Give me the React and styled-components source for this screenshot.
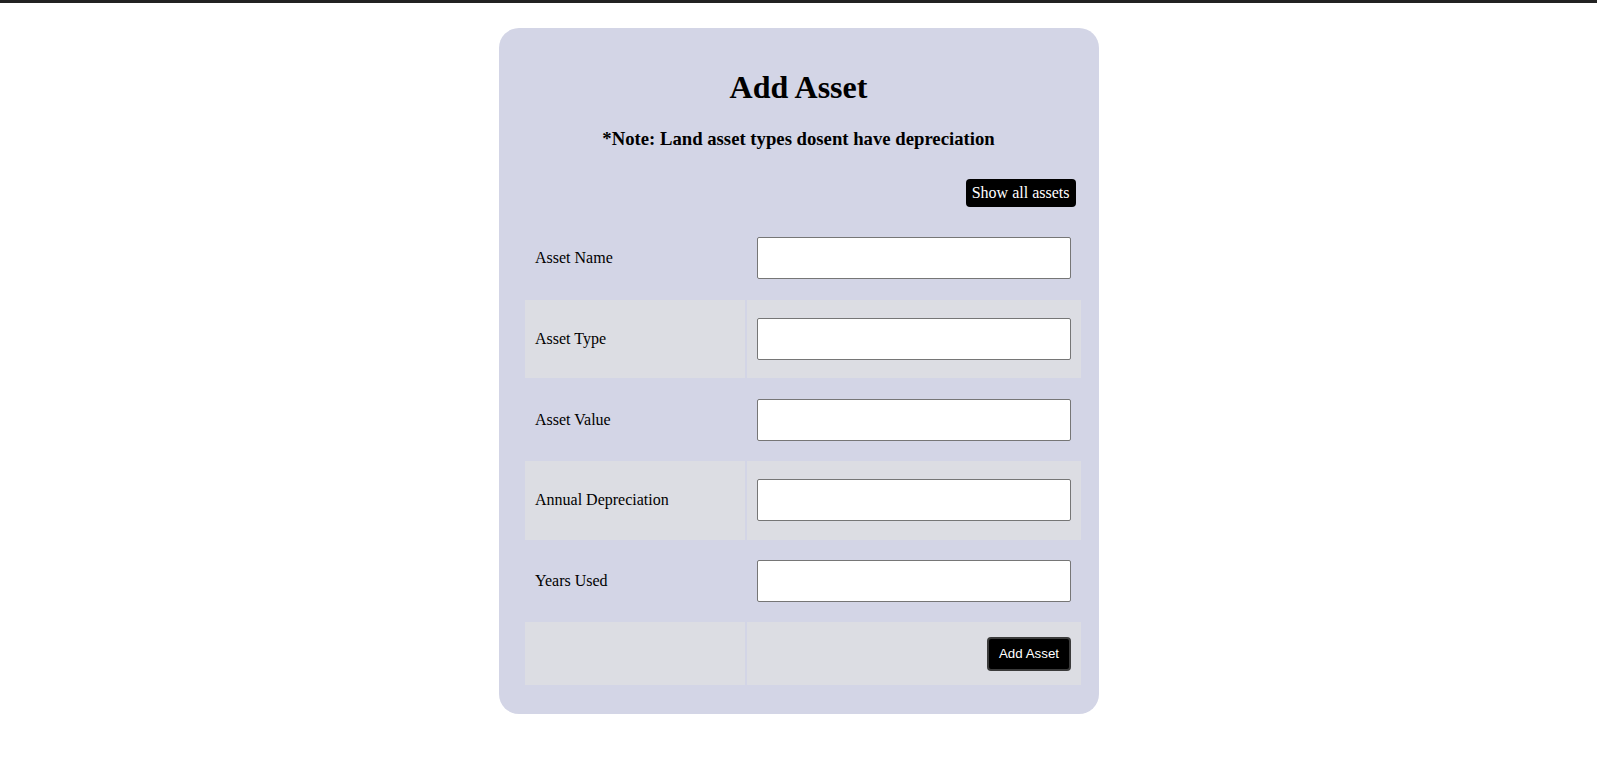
import React from 'react'
import styled, { createGlobalStyle } from 'styled-components'

const GlobalStyle = createGlobalStyle`
    body {
        margin: 0;
        background: #ffffff;
        font-family: "Liberation Serif", "Times New Roman", serif;
        color: #000;
    }
`

const TopBar = styled.div`
    height: 3px;
    background: #222222;
`

const Card = styled.div`
    box-sizing: border-box;
    width: 600px;
    margin: 25px auto 0;
    padding: 20px 22px 27px;
    background: #d3d5e6;
    border-radius: 20px;

    h1 {
        text-align: center;
        font-size: 32px;
        margin: 21.44px 0;
    }

    h3 {
        text-align: center;
        font-size: 18.72px;
        margin: 18.72px 0;
    }
`

const Actions = styled.div`
    display: flex;
    justify-content: flex-end;
    margin: 29px 1px 10px 0;
`

const LinkButton = styled.button`
    font-family: "Liberation Serif", "Times New Roman", serif;
    font-size: 16px;
    line-height: 18px;
    padding: 5px 6px;
    background: #000;
    color: #fff;
    border: none;
    border-radius: 4px;
    cursor: pointer;
`

const Table = styled.table`
    table-layout: fixed;
    width: 560px;
    border-spacing: 2px;
    margin-left: 2.5px;
`

const Cell = styled.td`
    box-sizing: border-box;
    padding: ${p => (p.$compact ? '14.5px 10px 14px' : '18.35px 10px')};
    background: ${p => (p.$shaded ? '#dcdde3' : 'transparent')};
    font-size: 16px;
    text-align: ${p => p.$right ? 'right' : 'left'};
    vertical-align: middle;
`

const Input = styled.input`
    box-sizing: border-box;
    display: block;
    width: 100%;
    height: 42px;
    border: 1px solid #767676;
    border-radius: 2px;
    background: #fff;
    padding: 2px 6px;
    font-size: 16px;
`

const SubmitButton = styled.button`
    font-family: "Liberation Sans", Arial, sans-serif;
    font-size: 13.33px;
    line-height: 15px;
    padding: 7.5px 10px;
    background: #000;
    color: #fff;
    border: 2px solid #3b3b3b;
    border-radius: 4px;
    cursor: pointer;
`

const fields = ['Asset Name', 'Asset Type', 'Asset Value', 'Annual Depreciation', 'Years Used']

const App = () => {
    return (
        <>
            <GlobalStyle />
            <TopBar />
            <Card>
                <h1>Add Asset</h1>
                <h3>*Note: Land asset types dosent have depreciation</h3>
                <Actions>
                    <LinkButton>Show all assets</LinkButton>
                </Actions>
                <Table>
                    <colgroup>
                        <col style={{ width: 220 }} />
                        <col style={{ width: 334 }} />
                    </colgroup>
                    <tbody>
                        {fields.map((label, i) => (
                            <tr key={label}>
                                <Cell $shaded={i % 2 === 1}>{label}</Cell>
                                <Cell $shaded={i % 2 === 1}>
                                    <Input type="text" />
                                </Cell>
                            </tr>
                        ))}
                        <tr>
                            <Cell $shaded $compact></Cell>
                            <Cell $shaded $compact $right>
                                <SubmitButton>Add Asset</SubmitButton>
                            </Cell>
                        </tr>
                    </tbody>
                </Table>
            </Card>
        </>
    )
}

export default App
